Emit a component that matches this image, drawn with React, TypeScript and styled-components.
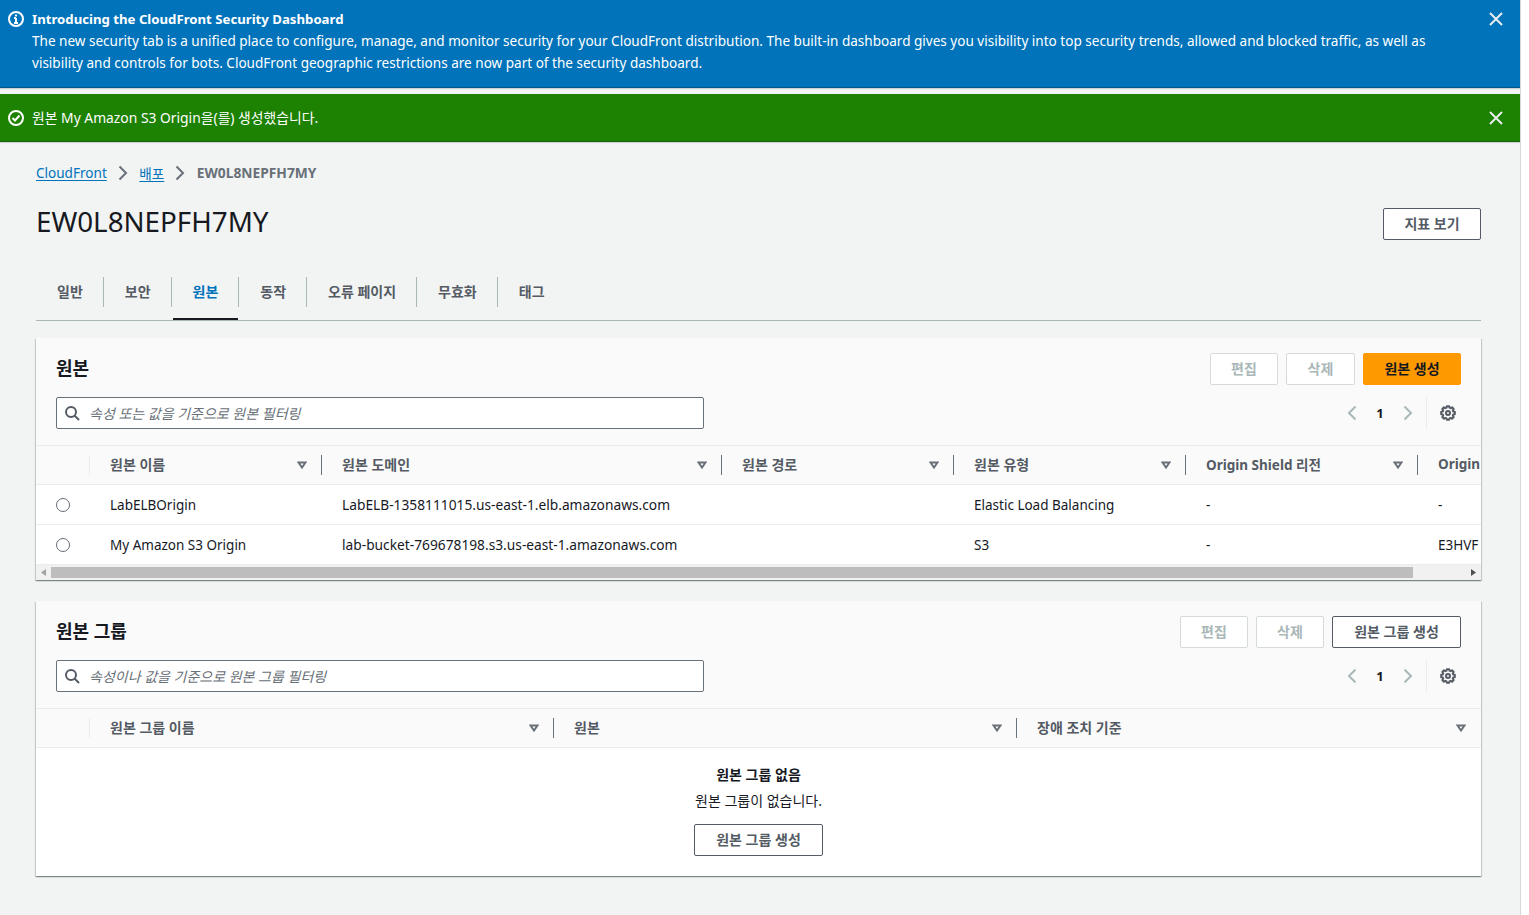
import { FC } from 'react';
import styled, { createGlobalStyle } from 'styled-components';

const FONT = '"Noto Sans", "Noto Sans CJK KR", sans-serif';

const GlobalStyle = createGlobalStyle`
  html, body {
    margin: 0;
    padding: 0;
    background: #fff;
    height: 100%;
    overflow: hidden;
  }
  body {
    font-family: ${FONT};
    font-size: 13.55px;
    color: #16191f;
  }
  * { box-sizing: border-box; }
`;

const Page = styled.div`
  width: 1520px;
  height: 915px;
  overflow: hidden;
  background: #f2f3f3;
  box-shadow: 1px 0 0 #d5dbdb;
`;

const Flash = styled.div<{ $bg: string; $height: number }>`
  display: flex;
  height: ${p => p.$height}px;
  background: ${p => p.$bg};
  color: #fff;
  padding-left: 8px;
  padding-right: 16px;
  border-bottom: 1px solid rgba(0, 28, 36, 0.3);
  box-shadow: 0 1px 1px rgba(0, 28, 36, 0.15);
`;

const FlashIcon = styled.div<{ $top: number }>`
  width: 24px;
  flex: none;
  padding-top: ${p => p.$top}px;
  line-height: 0;
`;

const FlashBody = styled.div<{ $top: number }>`
  flex: 1;
  padding-top: ${p => p.$top}px;
  line-height: 22px;
`;

const FlashTitle = styled.div`
  font-weight: 700;
  font-size: 13.2px;
`;

const SuccessText = styled.span`
  font-size: 13.85px;
`;

const FlashClose = styled.div<{ $top: number }>`
  width: 16px;
  flex: none;
  padding-top: ${p => p.$top}px;
  line-height: 0;
`;

const Gap = styled.div`
  height: 6px;
`;

const Content = styled.main`
  padding: 20px 39px 0 36px;
`;

const Breadcrumbs = styled.nav`
  display: flex;
  align-items: center;
  height: 22px;
`;

const Crumb = styled.a`
  color: #0073bb;
  text-decoration: underline;
  text-underline-offset: 2px;
`;

const CrumbCurrent = styled.span`
  color: #687078;
  font-weight: 700;
  font-size: 13.8px;
  margin-bottom: 2px;
`;

const CrumbSep = styled.span`
  display: flex;
  width: 32.5px;
  justify-content: center;
  line-height: 0;
`;

const HeaderRow = styled.div`
  display: flex;
  justify-content: space-between;
  align-items: center;
  height: 32px;
  margin-top: 24px;
`;

const PageTitle = styled.h1`
  margin: -6px 0 0;
  font-size: 27.75px;
  font-weight: 400;
  line-height: 32px;
  color: #16191f;
`;

const Button = styled.button<{ $variant?: 'primary' | 'disabled' | 'normal'; $width: number }>`
  width: ${p => p.$width}px;
  height: 32px;
  flex: none;
  font-family: ${FONT};
  font-size: 14px;
  font-weight: 700;
  border-radius: 2px;
  padding: 0 0 2px 0;
  border: 1px solid ${p =>
    p.$variant === 'primary' ? '#ff9900' : p.$variant === 'disabled' ? '#d5dbdb' : '#545b64'};
  background: ${p => (p.$variant === 'primary' ? '#ff9900' : '#fff')};
  color: ${p =>
    p.$variant === 'primary' ? '#16191f' : p.$variant === 'disabled' ? '#aab7b8' : '#545b64'};
`;

const Tabs = styled.div`
  display: flex;
  height: 44px;
  margin-top: 37px;
  border-bottom: 1px solid #aab7b8;
`;

const Tab = styled.div<{ $active?: boolean; $last?: boolean }>`
  position: relative;
  display: flex;
  align-items: flex-start;
  height: 43px;
  padding: 0 1px;
  color: ${p => (p.$active ? '#0073bb' : '#545b64')};
  font-weight: 700;
  font-size: 14px;

  span {
    display: block;
    height: 30px;
    line-height: 30px;
    padding: 0 20px;
    border-right: ${p => (p.$last ? '0' : '1px solid #aab7b8')};
    margin-right: -1px;
  }

  ${p => p.$active && `
    &::after {
      content: '';
      position: absolute;
      left: 1px;
      right: 1px;
      bottom: 0;
      height: 2px;
      background: #16191f;
    }
  `}
`;

const Card = styled.section<{ $top: number }>`
  margin-top: ${p => p.$top}px;
  background: #fff;
  box-shadow: 0 1px 1px 0 rgba(0, 28, 36, 0.3), 1px 1px 1px 0 rgba(0, 28, 36, 0.15), -1px 1px 1px 0 rgba(0, 28, 36, 0.15);
`;

const CardHead = styled.div`
  background: #fafafa;
  padding: 15px 20px 16px 20px;
  border-bottom: 1px solid #eaeded;
`;

const TitleRow = styled.div`
  display: flex;
  justify-content: space-between;
  align-items: center;
  height: 32px;
`;

const CardTitle = styled.h2`
  margin: -2px 0 0;
  font-size: 18px;
  font-weight: 700;
  line-height: 22px;
`;

const Actions = styled.div`
  display: flex;
  gap: 8px;
`;

const ToolRow = styled.div`
  display: flex;
  justify-content: space-between;
  align-items: center;
  height: 32px;
  margin-top: 12px;
`;

const Search = styled.div`
  display: flex;
  align-items: center;
  width: 648px;
  height: 32px;
  background: #fff;
  border: 1px solid #687078;
  border-radius: 2px;
  padding-left: 7px;
  gap: 9px;
`;

const SearchHint = styled.span`
  font-style: italic;
  font-size: 14px;
  color: #687078;
`;

const Pager = styled.div`
  display: flex;
  align-items: center;
  height: 32px;
`;

const PageNo = styled.span`
  width: 30px;
  text-align: center;
  font-weight: 700;
  font-size: 13px;
`;

const PagerArrow = styled.span`
  display: flex;
  width: 26px;
  justify-content: center;
  line-height: 0;
`;

const PagerDivider = styled.span`
  width: 1px;
  height: 32px;
  background: #eaeded;
  margin: 0 13px 0 5px;
`;

const GearSlot = styled.span`
  width: 21px;
  line-height: 0;
`;

const TableClip = styled.div`
  overflow: hidden;
`;

const HeadRow = styled.div<{ $cols: string }>`
  display: grid;
  grid-template-columns: ${p => p.$cols};
  height: 39px;
  align-items: center;
  background: #fafafa;
  border-bottom: 1px solid #eaeded;
`;

const HeadCell = styled.div<{ $faint?: boolean; $noDivider?: boolean }>`
  position: relative;
  display: flex;
  align-items: center;
  justify-content: space-between;
  height: 20px;
  padding: 0 14px 0 20px;
  font-weight: 700;
  color: #545b64;
  white-space: nowrap;
  min-width: 0;
  border-right: 1px solid ${p =>
    p.$noDivider ? 'transparent' : p.$faint ? '#eaeded' : '#687078'};
`;

const HeadLabel = styled.span<{ $latin?: boolean }>`
  font-size: ${p => (p.$latin ? 13.5 : 14)}px;
  margin-top: -2px;
`;

const BodyRow = styled.div<{ $cols: string }>`
  display: grid;
  grid-template-columns: ${p => p.$cols};
  height: 40px;
  align-items: center;
  border-bottom: 1px solid #eaeded;
`;

const BodyCell = styled.div<{ $wide?: boolean }>`
  padding-left: 20px;
  font-size: ${p => (p.$wide ? 13.75 : 13.5)}px;
  white-space: nowrap;
  overflow: hidden;
`;

const RadioCell = styled.div`
  padding-left: 20px;
  line-height: 0;
`;

const Radio = styled.span`
  display: inline-block;
  width: 14px;
  height: 14px;
  border: 1px solid #687078;
  border-radius: 50%;
  background: #fff;
`;

const ScrollTrack = styled.div`
  display: flex;
  align-items: center;
  height: 15px;
  background: #f1f1f1;
`;

const ScrollButton = styled.span`
  display: flex;
  width: 15px;
  flex: none;
  justify-content: center;
  line-height: 0;
`;

const ScrollThumb = styled.div`
  height: 11px;
  width: 1362px;
  background: #bdbdbd;
`;

const ScrollRest = styled.div`
  flex: 1;
`;

const Empty = styled.div`
  display: flex;
  flex-direction: column;
  align-items: center;
  height: 128px;
  padding-top: 14px;
  line-height: 26px;
`;

const EmptyTitle = styled.div`
  font-weight: 700;
  font-size: 14px;
`;

const EmptyText = styled.div`
  font-size: 14px;
`;

const EmptyAction = styled.div`
  margin-top: 10px;
  line-height: 0;
`;

const Info = () => (
  <svg width="16" height="16" viewBox="0 0 16 16" fill="none" stroke="#fff" strokeWidth="2">
    <circle cx="8" cy="8" r="7" />
    <path d="M8 7v5M6 12h4M6 7h2M8 3.5v2" />
  </svg>
);

const Check = () => (
  <svg width="16" height="16" viewBox="0 0 16 16" fill="none" stroke="#fff" strokeWidth="2">
    <circle cx="8" cy="8" r="7" />
    <path d="M4.5 8l2.5 2.5 4.5-5" />
  </svg>
);

const Close = () => (
  <svg width="16" height="16" viewBox="0 0 16 16" fill="none" stroke="#eaeded" strokeWidth="2">
    <path d="M2 2l12 12M14 2L2 14" />
  </svg>
);

const Chevron: FC<{ dir: 'left' | 'right'; color: string }> = ({ dir, color }) => (
  <svg width="16" height="16" viewBox="0 0 16 16" fill="none" stroke={color} strokeWidth="2">
    <path d={dir === 'right' ? 'M4.5 1.5L11 8l-6.5 6.5' : 'M11.5 1.5L5 8l6.5 6.5'} />
  </svg>
);

const SearchIcon = () => (
  <svg width="16" height="16" viewBox="0 0 16 16" fill="none" stroke="#545b64" strokeWidth="2" style={{ flex: 'none' }}>
    <circle cx="7" cy="7" r="5" />
    <path d="M10.5 10.5L15 15" />
  </svg>
);

const Caret = () => (
  <svg width="10" height="8" viewBox="0 0 10 8" fill="none" stroke="#687078" strokeWidth="2" style={{ flex: 'none' }}>
    <path d="M1.5 1.5h7L5 6.5z" />
  </svg>
);

const Gear = () => (
  <svg width="16" height="16" viewBox="0 0 16 16" fill="none" stroke="#545b64" strokeWidth="2" strokeLinejoin="round">
    <circle cx="8" cy="8" r="2" />
    <path d="M6.8 1.2h2.4l.3 1.5 1.2.5 1.3-.9 1.7 1.7-.9 1.3.5 1.2 1.5.3v2.4l-1.5.3-.5 1.2.9 1.3-1.7 1.7-1.3-.9-1.2.5-.3 1.5H6.8l-.3-1.5-1.2-.5-1.3.9-1.7-1.7.9-1.3-.5-1.2-1.5-.3V6.8l1.5-.3.5-1.2-.9-1.3 1.7-1.7 1.3.9 1.2-.5z" />
  </svg>
);

const ORIGIN_COLS = '54px 232px 400px 232px 232px 232px 264px';
const GROUP_COLS = '54px 464px 463px 464px';

const originHeads = ['원본 이름', '원본 도메인', '원본 경로', '원본 유형'];

const originRows = [
  ['LabELBOrigin', 'LabELB-1358111015.us-east-1.elb.amazonaws.com', '', 'Elastic Load Balancing', '-', '-'],
  ['My Amazon S3 Origin', 'lab-bucket-769678198.s3.us-east-1.amazonaws.com', '', 'S3', '-', 'E3HVF'],
];

const tabs = ['일반', '보안', '원본', '동작', '오류 페이지', '무효화', '태그'];

const Toolbar: FC<{ hint: string }> = ({ hint }) => (
  <ToolRow>
    <Search>
      <SearchIcon />
      <SearchHint>{hint}</SearchHint>
    </Search>
    <Pager>
      <PagerArrow><Chevron dir="left" color="#aab7b8" /></PagerArrow>
      <PageNo>1</PageNo>
      <PagerArrow><Chevron dir="right" color="#aab7b8" /></PagerArrow>
      <PagerDivider />
      <GearSlot><Gear /></GearSlot>
    </Pager>
  </ToolRow>
);

export default function App() {
  return (
    <Page>
      <GlobalStyle />
      <Flash $bg="#0073bb" $height={88}>
        <FlashIcon $top={11}><Info /></FlashIcon>
        <FlashBody $top={8}>
          <FlashTitle>Introducing the CloudFront Security Dashboard</FlashTitle>
          The new security tab is a unified place to configure, manage, and monitor security for your CloudFront distribution. The built-in dashboard gives you visibility into top security trends, allowed and blocked traffic, as well as<br />
          visibility and controls for bots. CloudFront geographic restrictions are now part of the security dashboard.
        </FlashBody>
        <FlashClose $top={11}><Close /></FlashClose>
      </Flash>
      <Gap />
      <Flash $bg="#1d8102" $height={48}>
        <FlashIcon $top={16}><Check /></FlashIcon>
        <FlashBody $top={13}><SuccessText>원본 My Amazon S3 Origin을(를) 생성했습니다.</SuccessText></FlashBody>
        <FlashClose $top={16}><Close /></FlashClose>
      </Flash>
      <Content>
        <Breadcrumbs>
          <Crumb>CloudFront</Crumb>
          <CrumbSep><Chevron dir="right" color="#687078" /></CrumbSep>
          <Crumb>배포</Crumb>
          <CrumbSep><Chevron dir="right" color="#687078" /></CrumbSep>
          <CrumbCurrent>EW0L8NEPFH7MY</CrumbCurrent>
        </Breadcrumbs>
        <HeaderRow>
          <PageTitle>EW0L8NEPFH7MY</PageTitle>
          <Button $width={98}>지표 보기</Button>
        </HeaderRow>
        <Tabs>
          {tabs.map((t, i) => (
            <Tab key={t} $active={t === '원본'} $last={i === tabs.length - 1}><span>{t}</span></Tab>
          ))}
        </Tabs>
        <Card $top={17}>
          <CardHead>
            <TitleRow>
              <CardTitle>원본</CardTitle>
              <Actions>
                <Button $variant="disabled" $width={68}>편집</Button>
                <Button $variant="disabled" $width={69}>삭제</Button>
                <Button $variant="primary" $width={98}>원본 생성</Button>
              </Actions>
            </TitleRow>
            <Toolbar hint="속성 또는 값을 기준으로 원본 필터링" />
          </CardHead>
          <TableClip>
            <HeadRow $cols={ORIGIN_COLS}>
              <HeadCell $faint />
              {originHeads.map(h => (
                <HeadCell key={h}><HeadLabel>{h}</HeadLabel><Caret /></HeadCell>
              ))}
              <HeadCell><HeadLabel $latin>Origin Shield 리전</HeadLabel><Caret /></HeadCell>
              <HeadCell $noDivider><HeadLabel $latin>Origin</HeadLabel></HeadCell>
            </HeadRow>
            {originRows.map(r => (
              <BodyRow key={r[0]} $cols={ORIGIN_COLS}>
                <RadioCell><Radio /></RadioCell>
                {r.map((c, i) => <BodyCell key={i} $wide={i === 1}>{c}</BodyCell>)}
              </BodyRow>
            ))}
          </TableClip>
          <ScrollTrack>
            <ScrollButton>
              <svg width="5" height="7" viewBox="0 0 5 7"><path d="M5 0v7L0 3.5z" fill="#a3a3a3" /></svg>
            </ScrollButton>
            <ScrollThumb />
            <ScrollRest />
            <ScrollButton>
              <svg width="5" height="7" viewBox="0 0 5 7"><path d="M0 0v7l5-3.5z" fill="#505050" /></svg>
            </ScrollButton>
          </ScrollTrack>
        </Card>
        <Card $top={21}>
          <CardHead>
            <TitleRow>
              <CardTitle>원본 그룹</CardTitle>
              <Actions>
                <Button $variant="disabled" $width={68}>편집</Button>
                <Button $variant="disabled" $width={68}>삭제</Button>
                <Button $width={129}>원본 그룹 생성</Button>
              </Actions>
            </TitleRow>
            <Toolbar hint="속성이나 값을 기준으로 원본 그룹 필터링" />
          </CardHead>
          <HeadRow $cols={GROUP_COLS}>
            <HeadCell $faint />
            <HeadCell><HeadLabel>원본 그룹 이름</HeadLabel><Caret /></HeadCell>
            <HeadCell><HeadLabel>원본</HeadLabel><Caret /></HeadCell>
            <HeadCell $noDivider><HeadLabel>장애 조치 기준</HeadLabel><Caret /></HeadCell>
          </HeadRow>
          <Empty>
            <EmptyTitle>원본 그룹 없음</EmptyTitle>
            <EmptyText>원본 그룹이 없습니다.</EmptyText>
            <EmptyAction><Button $width={129}>원본 그룹 생성</Button></EmptyAction>
          </Empty>
        </Card>
      </Content>
    </Page>
  );
}
